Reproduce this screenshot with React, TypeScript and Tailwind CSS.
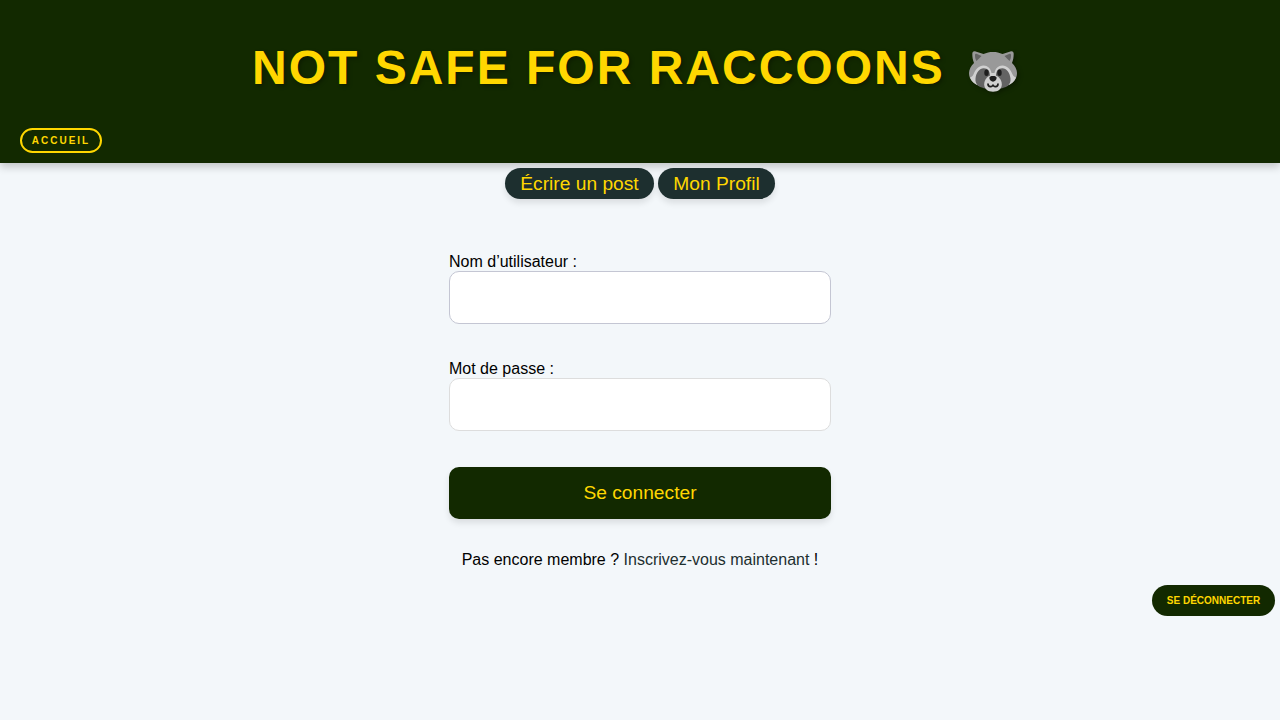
function Raccoon() {
  return (
    <svg viewBox="0 0 48 41" className="mr-[10px] ml-[9px] inline-block h-[41px] w-[48px] translate-y-[8px] align-baseline drop-shadow-[2px_2px_2px_rgba(0,0,0,0.3)]" role="img" aria-label="raccoon">
      <path fill="#999999" d="M3.300 2.800C3.300 .8 4.800 0 6.600 .5L14.500 3C17.500 1.500 20.500 .9 24 .9s6.500 .6 9.500 2.100L41.400 .5c1.800-.5 3.300 .3 3.300 2.300 0 3.500-.5 6.500-1.700 9.200C46 15 48 18.500 48 22c0 6-4 10-9.500 12.500L24 38 9.500 34.500C4 32 0 28 0 22c0-3.500 2-7 5-10C3.800 9.300 3.300 6.300 3.300 2.800Z" />
      <path fill="#636363" d="M6 4.200c0-1.200 .8-1.700 2-1.200L12.500 5 7.500 10C6.500 8.500 6 6.500 6 4.200Zm36 0c0-1.200-.8-1.700-2-1.200L35.500 5l5 5c1-1.500 1.500-3.500 1.500-5.800Z" />
      <path fill="#d0d0d0" d="M1 26.500c1.700-.5 2.800-1.500 3.500-3.200C6.500 18 10 14.500 14.500 14.500c4.300 0 7 2.800 8 7.500h3c1-4.700 3.700-7.500 8-7.500 4.500 0 8 3.500 10 8.800.7 1.700 1.800 2.700 3.500 3.200-1.300 4-4.500 6.500-8.500 8L24 37 9.500 34.500C5.500 33 2.300 30.500 1 26.500Z" />
      <path fill="#636363" d="M6.500 27.500C7 22 10.500 17.300 14.700 17.300c4.200 0 6.300 3 6.300 7.700L17 37.500c-3-.3-5.500-1.200-7.500-2.500-2.300-1.600-3.400-4.300-3-7.500Zm35 0c-.5-5.500-4-10.200-8.200-10.200-4.200 0-6.300 3-6.300 7.700L31 37.500c3-.3 5.500-1.200 7.500-2.500 2.300-1.600 3.400-4.300 3-7.500Z" />
      <path fill="#d0d0d0" d="M15.200 33.200c0-4.900 4-9.200 8.800-9.200s8.800 4.300 8.800 9.200c0 4.800-3.700 7.500-8.800 7.500s-8.800-2.700-8.800-7.500Z" />
      <ellipse cx="17.500" cy="21.800" rx="2.200" ry="3.200" fill="#1e1e1e" />
      <ellipse cx="30.500" cy="21.800" rx="2.200" ry="3.200" fill="#1e1e1e" />
      <path fill="#1e1e1e" d="M20.400 27c0-1.500 1.400-2 3.600-2s3.600.5 3.600 2c0 1.700-1.800 3.700-3.600 3.700s-3.600-2-3.600-3.700Z" />
      <path fill="none" stroke="#1e1e1e" strokeWidth="1.700" strokeLinecap="round" d="M19 33c0 3.200 4.800 3.600 5 .5 .2 3.100 5 2.700 5-.5" />
    </svg>
  );
}

export default function App() {
  return (
    <div className="flex min-h-screen flex-col bg-[#f3f7fa] font-['Liberation_Sans',Arial,sans-serif] text-black">
      <header className="flex h-[163px] flex-col bg-[#122900] shadow-[0_4px_8px_rgba(0,0,0,0.2)]">
        <h1 className="h-24 pt-[39px] pr-px text-center text-[48px] leading-[58px] font-bold tracking-[2px] text-[#ffd700] [text-shadow:2px_2px_4px_rgba(0,0,0,0.3)]">
          NOT SAFE FOR RACCOONS <Raccoon />
        </h1>
        <nav className="mt-8 flex px-5">
          <a className="flex h-[25px] w-[82px] items-center justify-center rounded-full border-2 border-[#ffd700] text-[10px] font-bold tracking-[2px] text-[#ffd700]">ACCUEIL</a>
        </nav>
      </header>
      <div className="mt-[5px] flex justify-center gap-1 text-[19.2px] text-[#ffd700]">
        <a className="flex h-[31px] w-[149px] items-center justify-center rounded-full bg-[#1d2f2f] pt-px shadow-[0_4px_6px_rgba(0,0,0,0.1)]">Écrire un post</a>
        <a className="flex h-[31px] w-[117px] items-center justify-center rounded-full bg-[#1d2f2f] pt-px shadow-[0_4px_6px_rgba(0,0,0,0.1)]">Mon Profil</a>
      </div>
      <form className="mx-auto mt-[53px] flex w-[382px] flex-col">
        <label htmlFor="user" className="text-base leading-[19px]">Nom d’utilisateur :</label>
        <input id="user" className="h-[53px] rounded-[10px] border border-[#c4c6d3] bg-white px-4" />
        <label htmlFor="pass" className="mt-[35px] text-base leading-[19px]">Mot de passe :</label>
        <input id="pass" type="password" className="h-[53px] rounded-[10px] border border-[#dddddd] bg-white px-4" />
        <button type="button" className="mt-9 h-[52px] rounded-[10px] bg-[#122900] text-[19.2px] text-[#ffd700] shadow-[0_4px_6px_rgba(0,0,0,0.1)]">Se connecter</button>
        <p className="mt-[31px] text-center text-base leading-[19px]">Pas encore membre ? <a className="text-[#1d2f2f]">Inscrivez-vous maintenant</a> !</p>
      </form>
      <div className="mt-4 flex justify-end pr-[5px]">
        <button type="button" className="h-[31px] w-[123px] rounded-full bg-[#122900] text-[10px] font-bold text-[#ffd700]">SE DÉCONNECTER</button>
      </div>
    </div>
  );
}
